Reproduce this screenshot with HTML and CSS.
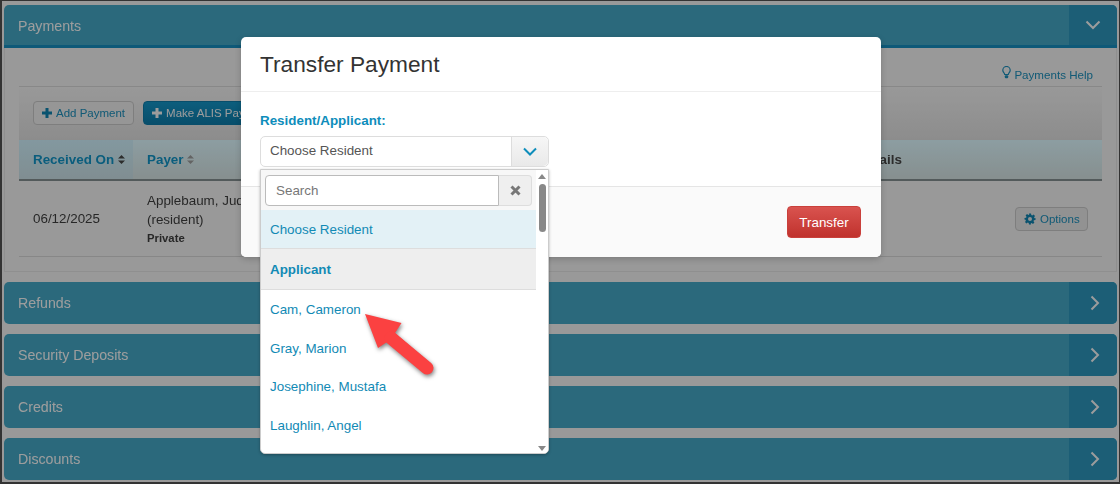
FILE: index.html
```html
<!DOCTYPE html>
<html lang="en">
<head>
    <meta charset="UTF-8">
    <title>Transfer Payment</title>
    <link rel="stylesheet" href="styles.css">
</head>
<body>
<div class="page">

    <!-- Payments panel, open -->
    <section class="panel">
        <header class="panel-head panel-head-open">
            <span class="panel-title">Payments</span>
            <span class="panel-toggle">
                <svg width="16" height="10" viewBox="0 0 16 10"><path d="M1.500 1.500 8 8l6.500-6.500" class="chev"/></svg>
            </span>
        </header>
        <div class="panel-body">
            <div class="help-row">
                <a class="help-link">
                    <svg width="9" height="13" viewBox="0 0 9 13"><path d="M2.700 8.500C2.500 6.800.8 6.300.8 4.200a3.700 3.700 0 0 1 7.400 0c0 2.100-1.700 2.600-1.900 4.300z" fill="none" stroke="#1a8ab5" stroke-width="1.200"/><rect x="2.800" y="9.300" width="3.400" height="3" rx="1" fill="#1a8ab5"/></svg>
                    Payments Help
                </a>
            </div>
            <div class="toolbar">
                <button class="btn">
                    <svg class="plus" viewBox="0 0 10 10"><path d="M3.500 0h3v3.500H10v3H6.500V10h-3V6.500H0v-3h3.500z"/></svg>
                    Add Payment
                </button>
                <button class="btn btn-blue">
                    <svg class="plus" viewBox="0 0 10 10"><path d="M3.500 0h3v3.500H10v3H6.500V10h-3V6.500H0v-3h3.500z"/></svg>
                    Make ALIS Payment
                </button>
            </div>
            <div class="table-head">
                <div class="col-date th-sorted">Received On <svg class="sort" viewBox="0 0 7 9"><path d="M3.500 0 7 3.500H0zM0 5.500h7L3.500 9z"/></svg></div>
                <div class="col-payer th-link">Payer <svg class="sort sort-off" viewBox="0 0 7 9"><path d="M3.500 0 7 3.500H0zM0 5.500h7L3.500 9z"/></svg></div>
                <div class="col-details">Details</div>
            </div>
            <div class="table-row">
                <div class="col-date">06/12/2025</div>
                <div class="col-payer">
                    Applebaum, Judy<br>(resident)
                    <small class="payer-type">Private</small>
                </div>
                <div class="col-details"></div>
                <button class="btn btn-options">
                    <svg class="gear" viewBox="0 0 24 24"><path fill-rule="evenodd" d="M10 1h4l.6 3.200 1.900.8 2.700-1.800 2.800 2.800-1.800 2.700.8 1.900L23 10v4l-3.200.6-.8 1.900 1.800 2.700-2.800 2.800-2.700-1.800-1.900.8L14 23h-4l-.6-3.200-1.900-.8-2.700 1.800L2 18l1.800-2.700-.8-1.900L1 13v-3l3.200-.6.800-1.900L3.200 4.800 6 2l2.700 1.800 1.900-.8zM12 8a4 4 0 1 0 0 8 4 4 0 0 0 0-8z"/></svg>
                    Options
                </button>
            </div>
        </div>
    </section>

    <!-- Closed panels -->
    <section class="panel panel-closed">
        <header class="panel-head">
            <span class="panel-title">Refunds</span>
            <span class="panel-toggle"><svg width="10" height="16" viewBox="0 0 10 16"><path d="M1.500 1.500 8 8l-6.500 6.500" class="chev"/></svg></span>
        </header>
    </section>
    <section class="panel panel-closed">
        <header class="panel-head">
            <span class="panel-title">Security Deposits</span>
            <span class="panel-toggle"><svg width="10" height="16" viewBox="0 0 10 16"><path d="M1.500 1.500 8 8l-6.500 6.500" class="chev"/></svg></span>
        </header>
    </section>
    <section class="panel panel-closed">
        <header class="panel-head">
            <span class="panel-title">Credits</span>
            <span class="panel-toggle"><svg width="10" height="16" viewBox="0 0 10 16"><path d="M1.500 1.500 8 8l-6.500 6.500" class="chev"/></svg></span>
        </header>
    </section>
    <section class="panel panel-closed">
        <header class="panel-head">
            <span class="panel-title">Discounts</span>
            <span class="panel-toggle"><svg width="10" height="16" viewBox="0 0 10 16"><path d="M1.500 1.500 8 8l-6.500 6.500" class="chev"/></svg></span>
        </header>
    </section>
</div>

<!-- Modal -->
<div class="modal">
    <div class="modal-head">Transfer Payment</div>
    <div class="modal-body">
        <label class="field-label">Resident/Applicant:</label>
        <div class="select">
            <div class="select-value">Choose Resident</div>
            <div class="select-caret">
                <svg width="14" height="9" viewBox="0 0 14 9"><path d="M1 1.500 7 7.500l6-6" fill="none" stroke="#0e8dbb" stroke-width="2"/></svg>
            </div>
            <div class="dropdown">
                <div class="dropdown-main">
                    <div class="search-row">
                        <input class="search-input" type="text" placeholder="Search">
                        <div class="search-clear">
                            <svg width="11" height="11" viewBox="0 0 11 11"><path d="M1.500 1.500l8 8m0-8-8 8" stroke="#777" stroke-width="3"/></svg>
                        </div>
                    </div>
                    <ul class="options">
                        <li class="option option-selected">Choose Resident</li>
                        <li class="option option-group">Applicant</li>
                        <li class="option">Cam, Cameron</li>
                        <li class="option">Gray, Marion</li>
                        <li class="option">Josephine, Mustafa</li>
                        <li class="option">Laughlin, Angel</li>
                    </ul>
                </div>
                <div class="scrollbar">
                    <span class="scroll-up"></span>
                    <span class="scroll-thumb"></span>
                    <span class="scroll-down"></span>
                </div>
            </div>
        </div>
    </div>
    <div class="modal-foot">
        <button class="btn-transfer">Transfer</button>
    </div>
</div>

<!-- Red callout arrow -->
<svg class="callout" width="90" height="80" viewBox="0 0 90 80">
    <path d="M5 6 41.500 15 35 25 68 54 62 61 27 34 18 40z" fill="#fb4141"/>
    <path d="M31 30 67 60" stroke="#fb4141" stroke-width="13" stroke-linecap="round"/>
</svg>
</body>
</html>
```

FILE: styles.css
```css
* {
    box-sizing: border-box;
}

html, body {
    height: 100%;
}

body {
    margin: 0;
    padding: 1px 1px 2px 2px;
    background-color: #333;
    font-family: "Liberation Sans", Arial, sans-serif;
    font-size: 13.400px;
    color: #3c3c3c;
}

/* page behind the modal is dimmed */
.page {
    height: 100%;
    padding: 4px 2px 0;
    background-color: #ebebeb;
    display: flex;
    flex-direction: column;
    gap: 10px;
    filter: brightness(0.65);
}

/* Panels */
.panel-head {
    height: 42px;
    display: flex;
    align-items: stretch;
    justify-content: space-between;
    background-color: #42a2bf;
    border-radius: 5px;
    overflow: hidden;
}

.panel-head-open {
    height: 43px;
    border-radius: 5px 5px 0 0;
    border-bottom: 3px solid #1689b8;
}

.panel-title {
    padding-left: 14px;
    line-height: 42px;
    color: #f2f2f2;
    font-size: 14.200px;
}

.panel-toggle {
    width: 48px;
    display: flex;
    align-items: center;
    justify-content: center;
    background-color: #2b91b6;
}

.panel-closed .panel-toggle {
    padding-left: 3px;
}

.chev {
    fill: none;
    stroke: #f0f0f0;
    stroke-width: 2;
}

.panel-body {
    height: 224px;
    padding: 0 14px;
    border: 1px solid #dcdcdc;
    border-top: none;
}

.help-row {
    height: 39px;
    padding: 18px 9px 0 0;
    text-align: right;
    border-bottom: 1px solid #d2d2d2;
}

.help-link {
    font-size: 11.600px;
    color: #1a8ab5;
}

.toolbar {
    height: 53px;
    padding: 14px 0 0 14px;
    display: flex;
    gap: 9px;
    align-items: flex-start;
    background: linear-gradient(#ebebeb, #d8d8d8);
}

/* Buttons */
.btn {
    height: 24px;
    padding: 0 8px;
    font-family: inherit;
    font-size: 11.500px;
    color: #1a8ab5;
    background: #e6e6e6;
    border: 1px solid #c2c2c2;
    border-radius: 4px;
    display: inline-flex;
    align-items: center;
    gap: 4px;
}

.btn-blue {
    color: #f0f0f0;
    background: linear-gradient(#1390c0, #0c78a5);
    border-color: #0c78a5;
    padding: 0 30px 0 8px;
}

.plus {
    width: 10px;
    height: 10px;
    fill: #0f7fab;
}

.btn-blue .plus {
    fill: #f0f0f0;
}

.btn-options {
    height: 24px;
    width: 73px;
    padding: 0 0 0 8px;
    flex-shrink: 0;
    margin-right: 14px;
    background: #e0e0e0;
}

.gear {
    width: 12px;
    height: 12px;
    fill: #0f7fab;
}

/* Table */
.table-head {
    height: 41px;
    display: flex;
    align-items: center;
    background: linear-gradient(#d8f2f8, #cfdcdc);
    border-bottom: 2px solid #7f8a8c;
    font-weight: bold;
    color: #444;
}

.col-date {
    width: 114px;
    padding-left: 14px;
    flex-shrink: 0;
}

.col-payer {
    width: 711px;
    padding-left: 14px;
    flex-shrink: 0;
}

.col-details {
    padding-left: 14px;
    flex: 1;
}

.th-sorted {
    height: 100%;
    line-height: 39px;
    color: #0f8fc0;
    background: linear-gradient(#c9eaf5, #c5dae0);
}

.th-link {
    color: #0f8fc0;
}

.sort {
    width: 7px;
    height: 9px;
    fill: #444;
}

.sort-off {
    fill: #999;
}

.table-row {
    height: 76px;
    display: flex;
    align-items: center;
    border-bottom: 1px solid #cfcfcf;
    line-height: 19px;
}

.table-row .col-payer {
    padding-top: 1px;
}

.payer-type {
    display: block;
    font-size: 11.300px;
    font-weight: bold;
}

/* Modal */
.modal {
    position: absolute;
    left: 241px;
    top: 37px;
    width: 640px;
    height: 220px;
    background-color: #fff;
    border-radius: 5px;
    box-shadow: 0 2px 6px rgba(0, 0, 0, 0.2);
    display: flex;
    flex-direction: column;
}

.modal-head {
    height: 55px;
    padding: 13px 19px 0;
    font-size: 22.700px;
    line-height: 28px;
    color: #333;
    border-bottom: 1px solid #eee;
}

.modal-body {
    height: 94px;
    padding: 20px 19px 0;
}

.field-label {
    display: block;
    height: 24px;
    font-weight: bold;
    line-height: 17px;
    color: #0e8dbb;
}

.select {
    position: relative;
    width: 289px;
    height: 31px;
    display: flex;
    border: 1px solid #ddd;
    border-radius: 5px;
}

.select-value {
    flex: 1;
    padding-left: 9px;
    line-height: 27px;
    color: #555;
}

.select-caret {
    width: 37px;
    display: flex;
    align-items: center;
    justify-content: center;
    background: linear-gradient(#f6f6f6, #e9e9e9);
    border-left: 1px solid #ddd;
    border-radius: 0 5px 5px 0;
}

.dropdown {
    position: absolute;
    left: -1px;
    top: 32px;
    width: 289px;
    height: 285px;
    display: flex;
    background-color: #fff;
    border: 1px solid #ccc;
    border-radius: 0 0 5px 5px;
    box-shadow: 0 1px 3px rgba(0, 0, 0, 0.3);
    overflow: hidden;
    z-index: 2;
}

.dropdown-main {
    flex: 1;
    min-width: 0;
}

.search-row {
    height: 40px;
    padding: 5px 3px 3px 4px;
    display: flex;
    background-color: #f7f7f7;
}

.search-input {
    width: 234px;
    height: 31px;
    padding: 0 10px;
    font-family: inherit;
    font-size: 13.400px;
    color: #555;
    border: 1px solid #bbb;
    border-radius: 4px 0 0 4px;
    outline: none;
}

.search-input::placeholder {
    color: #777;
}

.search-clear {
    width: 33px;
    height: 31px;
    display: flex;
    align-items: center;
    justify-content: center;
    background-color: #efefef;
    border: 1px solid #ddd;
    border-left: none;
    border-radius: 0 4px 4px 0;
}

.options {
    margin: 0;
    padding: 0;
    list-style: none;
}

.option {
    height: 38.700px;
    padding-left: 9px;
    line-height: 40px;
    color: #128ab5;
}

.option-selected {
    height: 39px;
    background-color: #e3f1f6;
    border-bottom: 1px solid #ddd;
}

.option-group {
    height: 41px;
    line-height: 41px;
    font-weight: bold;
    background-color: #eee;
    border-bottom: 1px solid #ddd;
}

.scrollbar {
    width: 12px;
    flex-shrink: 0;
    padding-top: 4px;
    display: flex;
    flex-direction: column;
    align-items: center;
    background-color: #fff;
}

.scroll-up {
    width: 0;
    height: 0;
    border-left: 4px solid transparent;
    border-right: 4px solid transparent;
    border-bottom: 5px solid #888;
}

.scroll-thumb {
    width: 7px;
    height: 48px;
    margin-top: 5px;
    background-color: #888;
    border-radius: 4px;
}

.scroll-down {
    margin-top: auto;
    margin-bottom: 2px;
    width: 0;
    height: 0;
    border-left: 4px solid transparent;
    border-right: 4px solid transparent;
    border-top: 5px solid #888;
}

.modal-foot {
    flex: 1;
    padding: 19px 20px 0 0;
    display: flex;
    justify-content: flex-end;
    align-items: flex-start;
    background-color: #fafafa;
    border-top: 1px solid #e5e5e5;
    border-radius: 0 0 5px 5px;
}

.btn-transfer {
    width: 74px;
    height: 32px;
    padding: 0;
    font-family: inherit;
    font-size: 13.400px;
    color: #fff;
    background: linear-gradient(#d9534f, #c0322d);
    border: 1px solid #c9403b;
    border-radius: 4px;
}

/* Arrow over the dropdown */
.callout {
    position: absolute;
    left: 360px;
    top: 308px;
    filter: drop-shadow(1px 2px 2px rgba(0, 0, 0, 0.5));
    z-index: 3;
}
```
